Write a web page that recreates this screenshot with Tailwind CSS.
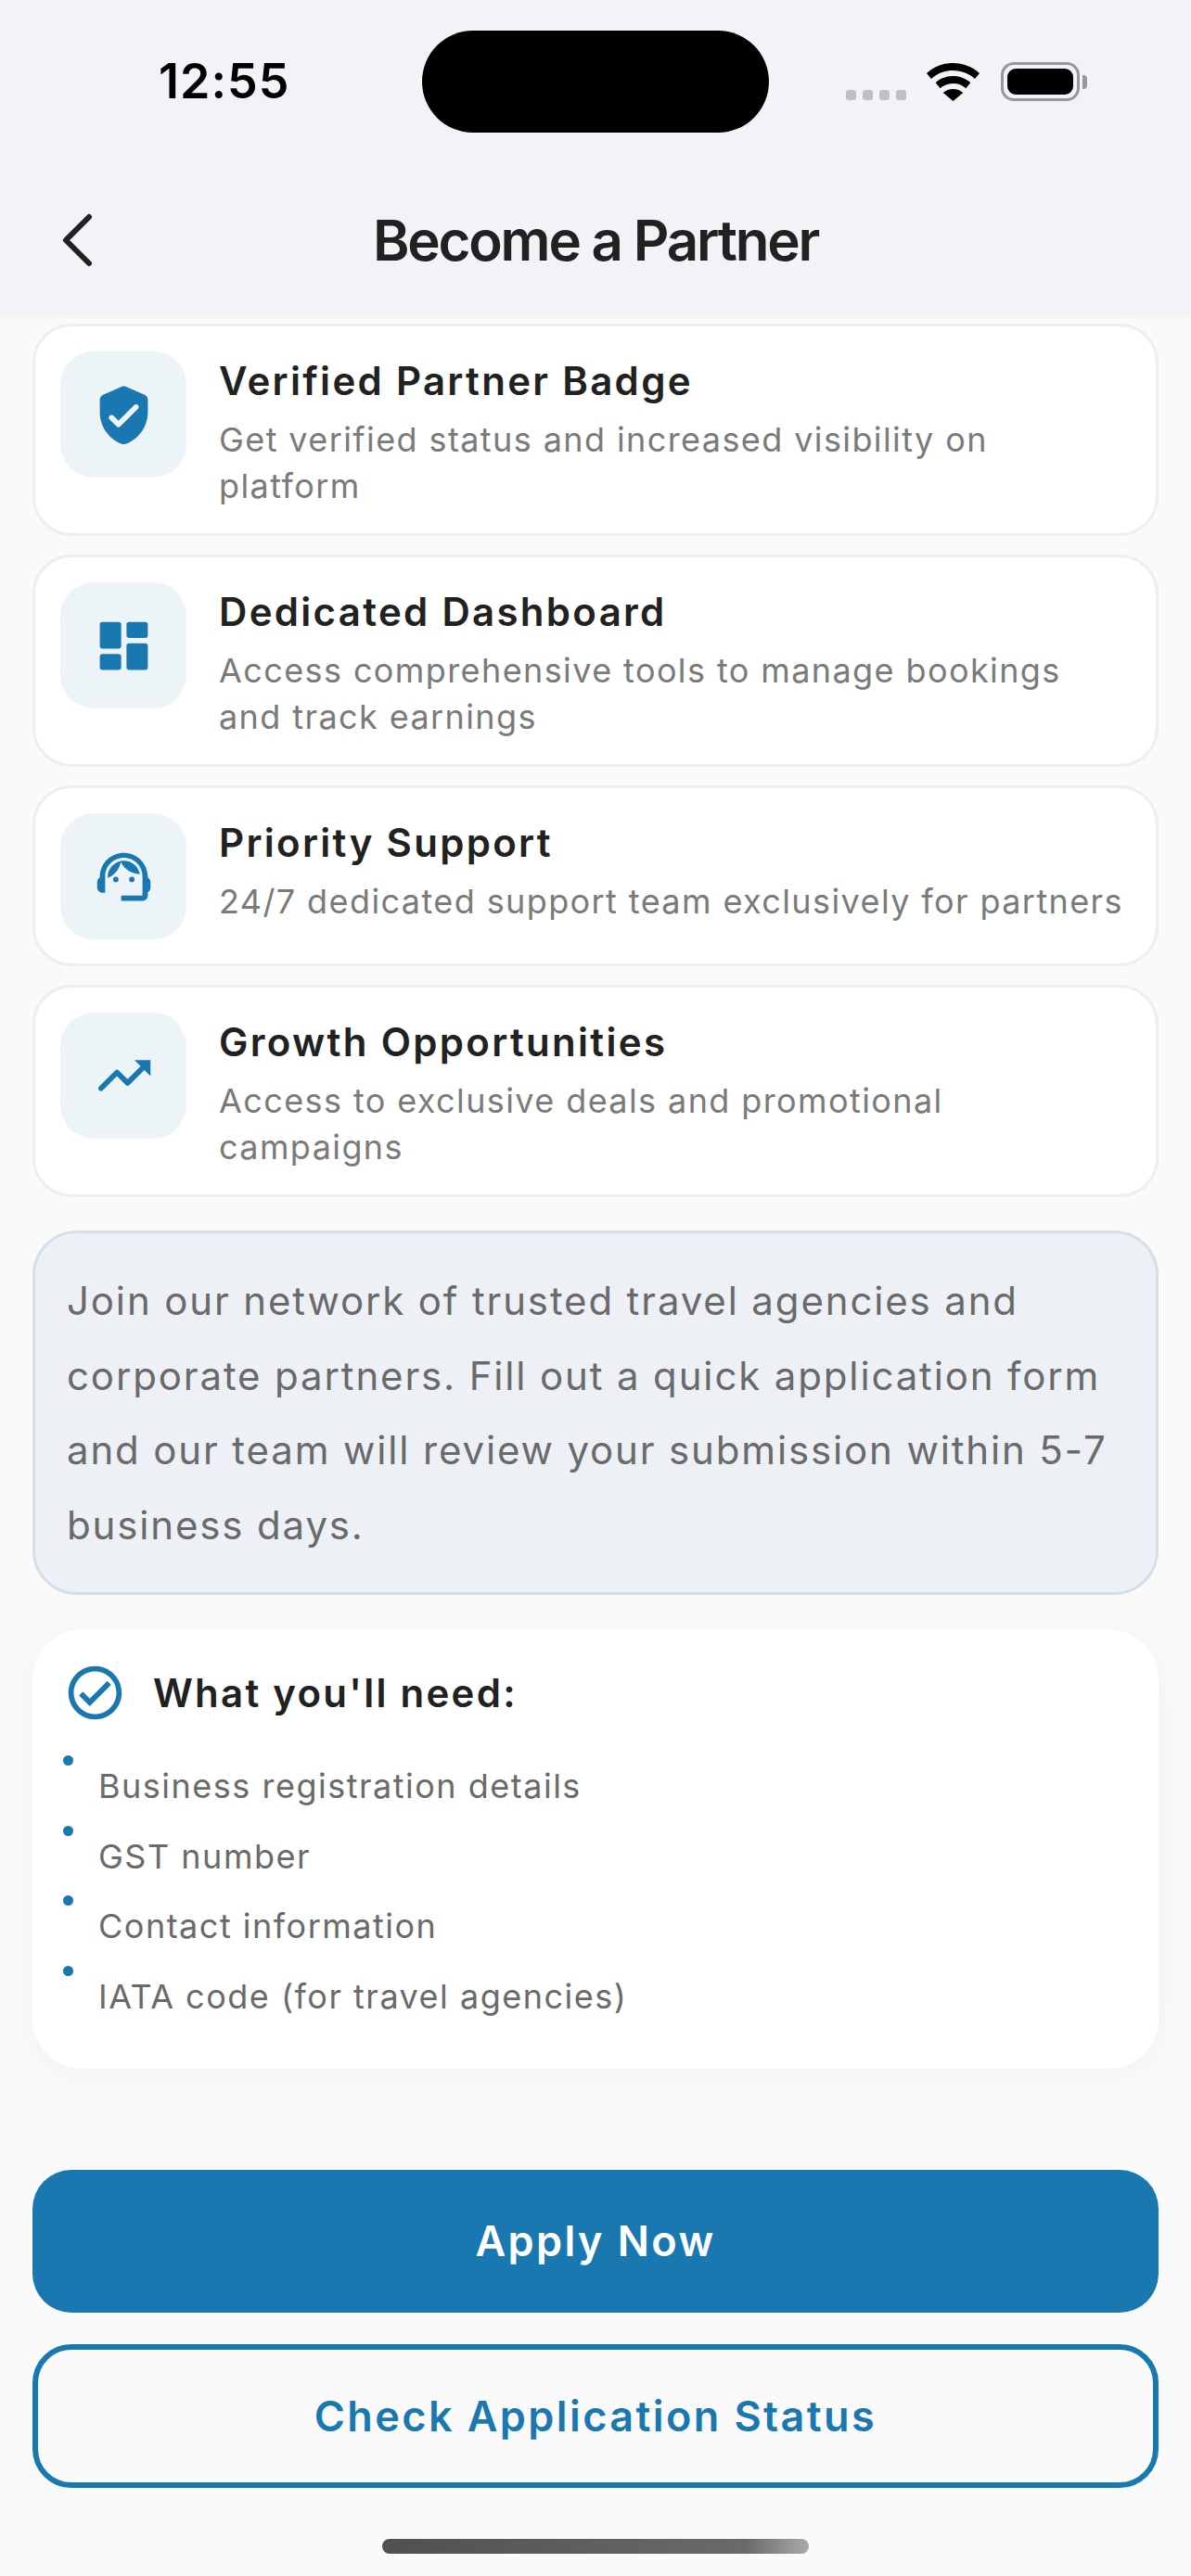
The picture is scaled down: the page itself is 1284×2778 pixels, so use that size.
<!DOCTYPE html>
<html lang="en">
<head>
<meta charset="utf-8">
<script src="https://cdn.jsdelivr.net/npm/@tailwindcss/browser@4"></script>
<title>Become a Partner</title>
</head>
<body class="m-0 bg-[#fafafa]">
<div class="w-[1284px] h-[2778px] overflow-hidden flex flex-col bg-[#fafafa] font-['Inter',sans-serif] antialiased">
  <header class="h-[343px] shrink-0 bg-[#f2f2f7] flex flex-col">
    <div class="mt-[33px] h-[110px] flex items-center">
      <div class="ml-[171px] w-[284px] text-[52px] leading-none font-semibold tracking-[1px] text-black">12:55</div>
      <div class="w-[374px] h-[110px] rounded-[55px] bg-black"></div>
      <div class="ml-[83px] flex items-end h-[42px] mt-[-1px]">
        <div class="flex gap-[7px] mb-[1px]">
          <span class="w-[11px] h-[11px] rounded-[3px] bg-[#c0c0c4]"></span>
          <span class="w-[11px] h-[11px] rounded-[3px] bg-[#c0c0c4]"></span>
          <span class="w-[11px] h-[11px] rounded-[3px] bg-[#c0c0c4]"></span>
          <span class="w-[11px] h-[11px] rounded-[3px] bg-[#c0c0c4]"></span>
        </div>
        <svg class="ml-[22px] w-[57px] h-[41px]" viewBox="0 0 57 41" fill="#000"><path d="M28.5 0C17.5 0 7.6 4 0 11l5 6C11 11.500 19.300 8 28.500 8S46 11.500 52 17l5-6C49.400 4 39.500 0 28.500 0z"/><path d="M28.500 14c-7.300 0-13.900 2.700-18.800 7.200l5 6c3.600-3.300 8.500-5.200 13.800-5.200s10.200 1.900 13.800 5.200l5-6C42.400 16.700 35.800 14 28.500 14z"/><path d="M28.500 28c-4.200 0-8 1.600-10.800 4.100L28.500 41l10.800-8.900C36.500 29.600 32.700 28 28.500 28z"/></svg>
        <div class="ml-[23px] w-[85px] h-[42px] rounded-[14px] border-[3px] border-[#98989c] p-[4px]"><div class="w-full h-full rounded-[9px] bg-black"></div></div>
        <div class="ml-[3px] mb-[13px] w-[5px] h-[15px] rounded-r-[4px] bg-[#98989c]"></div>
      </div>
    </div>
    <nav class="mt-[61px] h-[110px] grid grid-cols-[1fr_auto_1fr] items-center">
      <svg class="ml-[64px] w-[38px] h-[60px]" viewBox="0 0 38 60" fill="none" stroke="#212121" stroke-width="6" stroke-linecap="round" stroke-linejoin="round"><path d="M32 5 L7 30 L32 55"/></svg>
      <h1 class="m-0 text-[60px] leading-none font-semibold tracking-[-2.2px] text-[#212121]">Become a Partner</h1>
      <div></div>
    </nav>
  </header>

  <main class="flex-1 flex flex-col px-[35px] pt-[6px]">
    <section class="flex flex-col gap-[20px]">
      <article class="flex gap-[35px] rounded-[42px] border-[3px] border-[#eeeeee] bg-white pt-[27px] pr-[27px] pb-[26px] pl-[27px]">
        <div class="w-[136px] h-[136px] shrink-0 rounded-[36px] bg-[#ecf4f8] flex items-center justify-center">
          <svg class="w-[69px] h-[69px]" viewBox="0 0 24 24" fill="#1a78b0"><path d="M11.190 1.360l-7 3.110C3.470 4.790 3 5.510 3 6.300V11c0 5.550 3.840 10.740 9 12 5.160-1.260 9-6.450 9-12V6.300c0-.79-.47-1.510-1.190-1.830l-7-3.110c-.52-.23-1.100-.23-1.620 0zM9.290 16.290L6.700 13.700a.996.996 0 010-1.410c.39-.39 1.020-.39 1.410 0L10 14.170l5.880-5.880c.39-.39 1.020-.39 1.410 0 .39.39.39 1.020 0 1.410l-6.590 6.590c-.38.39-1.020.39-1.410 0z"/></svg>
        </div>
        <div class="min-w-0">
          <h2 class="m-0 h-[70px] text-[42px] leading-[64px] font-semibold tracking-[2.3px] text-[#212121]">Verified Partner Badge</h2>
          <p class="m-0 text-[36px] leading-[50px] tracking-[1.4px] text-[#7a7a7a]">Get verified status and increased visibility on platform</p>
        </div>
      </article>
      <article class="flex gap-[35px] rounded-[42px] border-[3px] border-[#eeeeee] bg-white pt-[27px] pr-[27px] pb-[26px] pl-[27px]">
        <div class="w-[136px] h-[136px] shrink-0 rounded-[36px] bg-[#ecf4f8] flex items-center justify-center">
          <svg class="w-[69px] h-[69px]" viewBox="0 0 24 24" fill="#1a78b0"><rect x="3" y="3" width="8" height="10" rx="1"/><rect x="3" y="15" width="8" height="6" rx="1"/><rect x="13" y="3" width="8" height="6" rx="1"/><rect x="13" y="11" width="8" height="10" rx="1"/></svg>
        </div>
        <div class="min-w-0">
          <h2 class="m-0 h-[70px] text-[42px] leading-[64px] font-semibold tracking-[2.3px] text-[#212121]">Dedicated Dashboard</h2>
          <p class="m-0 text-[36px] leading-[50px] tracking-[1.4px] text-[#7a7a7a]">Access comprehensive tools to manage bookings and track earnings</p>
        </div>
      </article>
      <article class="flex gap-[35px] rounded-[42px] border-[3px] border-[#eeeeee] bg-white pt-[27px] pr-[27px] pb-[26px] pl-[27px]">
        <div class="w-[136px] h-[136px] shrink-0 rounded-[36px] bg-[#ecf4f8] flex items-center justify-center">
          <svg class="w-[69px] h-[69px]" viewBox="0 0 24 24" fill="#1a78b0"><path d="M21 12.220C21 6.730 16.740 3 12 3c-4.690 0-9 3.650-9 9.280-.6.34-1 .98-1 1.720v2c0 1.100.9 2 2 2h1v-6.100c0-3.870 3.130-7 7-7s7 3.130 7 7V19h-8v2h8c1.100 0 2-.9 2-2v-1.220c.59-.31 1-.92 1-1.610v-2.300c0-.67-.41-1.280-1-1.650z"/><circle cx="9" cy="13" r="1"/><circle cx="15" cy="13" r="1"/><path d="M18 11.030C17.520 8.180 15.040 6 12.050 6c-3.030 0-6.290 2.510-6.030 6.450 2.470-1.010 4.330-3.210 4.860-5.890 1.310 2.630 4 4.440 7.120 4.470z"/></svg>
        </div>
        <div class="min-w-0">
          <h2 class="m-0 h-[70px] text-[42px] leading-[64px] font-semibold tracking-[2.3px] text-[#212121]">Priority Support</h2>
          <p class="m-0 text-[36px] leading-[50px] tracking-[1.4px] text-[#7a7a7a]">24/7 dedicated support team exclusively for partners</p>
        </div>
      </article>
      <article class="flex gap-[35px] rounded-[42px] border-[3px] border-[#eeeeee] bg-white pt-[27px] pr-[27px] pb-[26px] pl-[27px]">
        <div class="w-[136px] h-[136px] shrink-0 rounded-[36px] bg-[#ecf4f8] flex items-center justify-center">
          <svg class="w-[69px] h-[69px]" viewBox="0 0 24 24" fill="#1a78b0"><path d="M16 6l2.290 2.290-4.880 4.880-3.290-3.290c-.39-.39-1.020-.39-1.410 0l-6 6.010c-.39.39-.39 1.020 0 1.410.39.39 1.020.39 1.410 0L9.410 12l3.290 3.290c.39.39 1.020.39 1.410 0l5.590-5.580L22 12V6z"/></svg>
        </div>
        <div class="min-w-0">
          <h2 class="m-0 h-[70px] text-[42px] leading-[64px] font-semibold tracking-[2.3px] text-[#212121]">Growth Opportunities</h2>
          <p class="m-0 text-[36px] leading-[50px] tracking-[1.4px] text-[#7a7a7a]">Access to exclusive deals and promotional campaigns</p>
        </div>
      </article>
    </section>

    <section class="mt-[36px] h-[393px] rounded-[48px] border-[3px] border-[#d2e0ec] bg-[#edf1f6] px-[34px] py-[33px]">
      <p class="m-0 text-[42px] leading-[80.6px] tracking-[1.85px] text-[#6a6a6a]">Join our network of trusted travel agencies and corporate partners. Fill out a quick application form and our team will review your submission within 5-7 business days.</p>
    </section>

    <section class="mt-[37px] h-[474px] rounded-[54px] bg-white pt-[34px] pl-[33px] shadow-[0_6px_36px_rgba(0,0,0,0.04)]">
      <div class="flex items-center gap-[28px]">
        <svg class="w-[69px] h-[69px]" viewBox="0 0 24 24" fill="#1a78b0"><path d="M12 2C6.480 2 2 6.480 2 12s4.480 10 10 10 10-4.480 10-10S17.520 2 12 2zm0 18c-4.410 0-8-3.590-8-8s3.590-8 8-8 8 3.590 8 8-3.590 8-8 8zm4.590-12.420L10 14.170l-2.590-2.580L6 13l4 4 8-8z"/></svg>
        <h3 class="m-0 text-[42px] leading-[54px] font-semibold tracking-[2.25px] text-[#212121]">What you'll need:</h3>
      </div>
      <ul class="m-0 mt-[33px] p-0 list-none flex flex-col gap-[15.5px]">
        <li class="flex h-[60px]"><span class="w-[11px] h-[11px] rounded-full bg-[#1a78b0] shrink-0"></span><span class="ml-[27px] pt-[6px] text-[36px] leading-[54px] tracking-[1.5px] text-[#6a6a6a]">Business registration details</span></li>
        <li class="flex h-[60px]"><span class="w-[11px] h-[11px] rounded-full bg-[#1a78b0] shrink-0"></span><span class="ml-[27px] pt-[6px] text-[36px] leading-[54px] tracking-[1.5px] text-[#6a6a6a]">GST number</span></li>
        <li class="flex h-[60px]"><span class="w-[11px] h-[11px] rounded-full bg-[#1a78b0] shrink-0"></span><span class="ml-[27px] pt-[6px] text-[36px] leading-[54px] tracking-[1.5px] text-[#6a6a6a]">Contact information</span></li>
        <li class="flex h-[60px]"><span class="w-[11px] h-[11px] rounded-full bg-[#1a78b0] shrink-0"></span><span class="ml-[27px] pt-[6px] text-[36px] leading-[54px] tracking-[1.5px] text-[#6a6a6a]">IATA code (for travel agencies)</span></li>
      </ul>
    </section>

    <div class="mt-[109px] flex flex-col gap-[34px]">
      <button class="h-[154px] rounded-[42px] bg-[#1a78b0] text-white text-[45px] font-semibold tracking-[2.4px]">Apply Now</button>
      <button class="h-[155px] rounded-[42px] border-[6px] border-[#1a78b0] bg-transparent text-[#1a78b0] text-[45px] font-semibold tracking-[2.4px]">Check Application Status</button>
    </div>
    <div class="mt-[55px] mx-auto w-[460px] h-[16px] rounded-full bg-gradient-to-r from-[#505050] via-[#6a6a6a] via-85% to-[#aaaaaa]"></div>
  </main>
</div>
</body>
</html>
